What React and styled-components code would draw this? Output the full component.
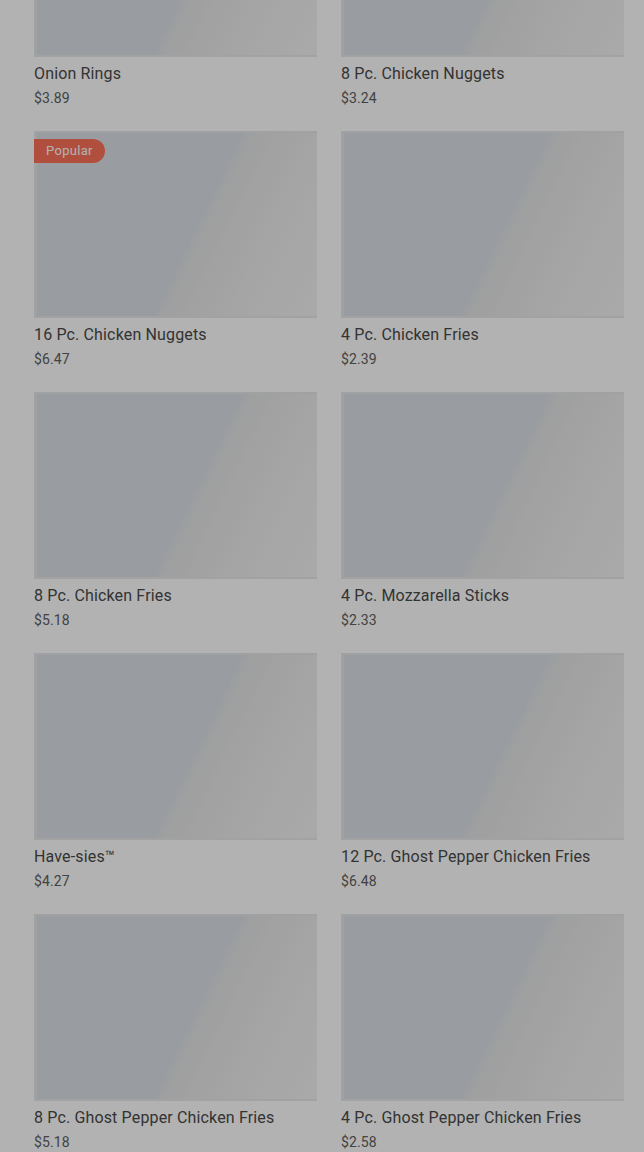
import React from 'react'
import styled, { createGlobalStyle } from 'styled-components'

const GlobalStyle = createGlobalStyle`
  html, body {
    margin: 0;
    padding: 0;
    background: #ffffff;
    font-family: Roboto, "Liberation Sans", sans-serif;
    overflow: hidden;
  }
`

const items = [
    { name: 'Onion Rings', price: '$3.89' },
    { name: '8 Pc. Chicken Nuggets', price: '$3.24' },
    { name: '16 Pc. Chicken Nuggets', price: '$6.47', popular: true },
    { name: '4 Pc. Chicken Fries', price: '$2.39' },
    { name: '8 Pc. Chicken Fries', price: '$5.18' },
    { name: '4 Pc. Mozzarella Sticks', price: '$2.33' },
    { name: 'Have-sies™', price: '$4.27' },
    { name: '12 Pc. Ghost Pepper Chicken Fries', price: '$6.48' },
    { name: '8 Pc. Ghost Pepper Chicken Fries', price: '$5.18' },
    { name: '4 Pc. Ghost Pepper Chicken Fries', price: '$2.58' },
]

const App = () => {
    return (
        <>
            <GlobalStyle />
            <Page>
                <Grid>
                    {items.map((item) => (
                        <Card key={item.name}>
                            <Thumb>
                                {item.popular ? <Badge>Popular</Badge> : null}
                            </Thumb>
                            <Title>{item.name}</Title>
                            <Price>{item.price}</Price>
                        </Card>
                    ))}
                </Grid>
            </Page>
            <Backdrop />
        </>
    )
}

const Page = styled.div`
    height: 1152px;
    overflow: hidden;
    padding: 0 20px 0 34px;
`

// list is scrolled: first row sits partly above the fold
const Grid = styled.div`
    display: grid;
    grid-template-columns: 283px 283px;
    column-gap: 24px;
    row-gap: 23px;
    margin-top: -130px;
`

const Card = styled.div`
    display: flex;
    flex-direction: column;
`

// image placeholder while loading
const Thumb = styled.div`
    position: relative;
    height: 187px;
    background: linear-gradient(116deg, #dce0e6 0%, #dce0e6 56%, #e3e4e6 58%, #e8e8e8 66%, #f0f0f0 88%, #f3f3f3 100%);
    box-shadow: inset 0 2px 0 #e6e7e9, inset 3px 0 0 #e6e7e9, inset 0 -2px 0 #e8e8e8;
`

const Badge = styled.span`
    position: absolute;
    top: 8px;
    left: 0;
    height: 24px;
    line-height: 24px;
    padding: 0 12px;
    border-radius: 0 12px 12px 0;
    background: #fd7259;
    color: #ffffff;
    font-size: 13px;
    letter-spacing: 0.3px;
`

const Title = styled.p`
    margin: 7px 0 0;
    font-size: 16px;
    line-height: 20px;
    color: #4a4a4a;
    letter-spacing: 0.15px;
`

const Price = styled.p`
    margin: 4px 0 0;
    font-size: 14px;
    line-height: 20px;
    color: #606060;
    letter-spacing: 0.1px;
`

const Backdrop = styled.div`
    position: fixed;
    inset: 0;
    background: rgba(0, 0, 0, 0.3);
`

export default App
